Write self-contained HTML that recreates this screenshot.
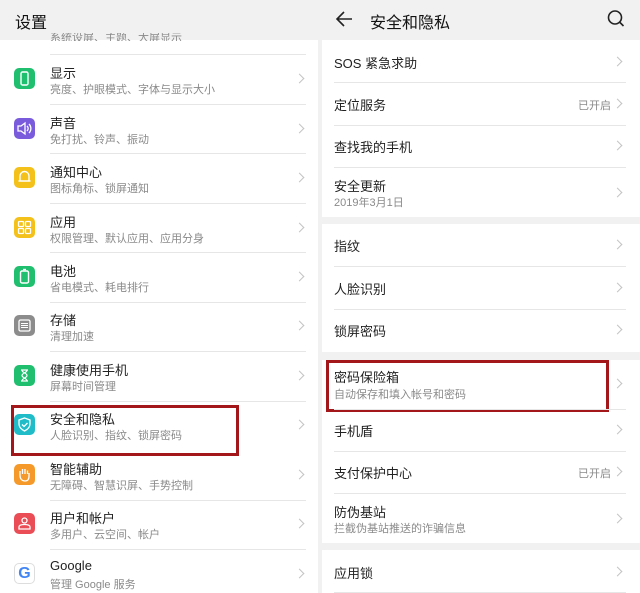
<!DOCTYPE html><html><head><meta charset="utf-8"><style>
*{margin:0;padding:0;box-sizing:border-box}
body{width:640px;height:593px;overflow:hidden;background:#fff;font-family:"Liberation Sans","Noto Sans CJK SC",sans-serif;position:relative}
.a{position:absolute;white-space:nowrap}
.t{font-size:13px;color:#222}
.s{font-size:11px;color:#8a8a8a}
.sep{position:absolute;height:1px;background:#e6e6e6}
.gap{position:absolute;left:320px;width:320px;background:#f1f1f1}
.ch{position:absolute;width:7px;height:7px;border-right:1.3px solid #c4c4c4;border-top:1.3px solid #c4c4c4;transform:rotate(45deg)}
.ic{position:absolute;left:14px;width:21px;height:21px;border-radius:5px}
.ic svg{position:absolute;left:0;top:0}
.box{position:absolute;border:3px solid #a3161a}
</style></head><body>
<div class="a" style="left:0;top:0;width:318px;height:40px;background:#f1f1f1"></div>
<div class="a" style="left:15px;top:9px;font-size:16px;color:#111">设置</div>
<div class="a" style="left:318px;top:0;width:4px;height:593px;background:#f1f1f1"></div>
<div class="a" style="left:322px;top:0;width:318px;height:40px;background:#f1f1f1"></div>
<svg class="a" style="left:334px;top:10px" width="20" height="18"><path d="M18 9H3M10 2L3 9l7 7" stroke="#222" stroke-width="1.6" fill="none"/></svg>
<div class="a" style="left:370px;top:9px;font-size:16px;color:#111">安全和隐私</div>
<svg class="a" style="left:606px;top:9px" width="20" height="20"><circle cx="9" cy="8.5" r="6.5" stroke="#222" stroke-width="1.6" fill="none"/><path d="M13.5 13l4 4" stroke="#222" stroke-width="1.6"/></svg>
<div class="a s" style="left:50px;top:33px;height:8px;overflow:hidden"><span style="position:relative;top:-4px">系统设屏、主题、大屏显示</span></div>
<div class="sep" style="left:50px;top:54px;width:256px"></div>
<div class="ic" style="top:68px;background:#1fbf6f"><svg width="21" height="21"><rect x="7" y="4" width="7" height="13" rx="1.5" stroke="#fff" stroke-width="1.4" fill="none"/></svg></div>
<div class="a t" style="left:50px;top:63px">显示</div><div class="a s" style="left:50px;top:81px">亮度、护眼模式、字体与显示大小</div><div class="ch" style="left:296px;top:75px"></div>
<div class="sep" style="left:50px;top:104px;width:256px"></div>
<div class="ic" style="top:118px;background:#7a5bdc"><svg width="21" height="21"><path d="M4 8h3l4-3v11l-4-3H4z M13 8c1.5 1.5 1.5 3.5 0 5 M15 6c2.5 2.5 2.5 6.5 0 9" stroke="#fff" stroke-width="1.3" fill="none"/></svg></div>
<div class="a t" style="left:50px;top:113px">声音</div><div class="a s" style="left:50px;top:131px">免打扰、铃声、振动</div><div class="ch" style="left:296px;top:125px"></div>
<div class="sep" style="left:50px;top:153px;width:256px"></div>
<div class="ic" style="top:167px;background:#f3c11a"><svg width="21" height="21"><path d="M6 14V9a4.5 4.5 0 019 0v5zM4.5 14h12" stroke="#fff" stroke-width="1.4" fill="none"/></svg></div>
<div class="a t" style="left:50px;top:162px">通知中心</div><div class="a s" style="left:50px;top:180px">图标角标、锁屏通知</div><div class="ch" style="left:296px;top:174px"></div>
<div class="sep" style="left:50px;top:203px;width:256px"></div>
<div class="ic" style="top:217px;background:#f3c11a"><svg width="21" height="21"><g stroke="#fff" stroke-width="1.3" fill="none"><rect x="4.5" y="4.5" width="5" height="5" rx="1"/><rect x="11.5" y="4.5" width="5" height="5" rx="1"/><rect x="4.5" y="11.5" width="5" height="5" rx="1"/><rect x="11.5" y="11.5" width="5" height="5" rx="1"/></g></svg></div>
<div class="a t" style="left:50px;top:212px">应用</div><div class="a s" style="left:50px;top:230px">权限管理、默认应用、应用分身</div><div class="ch" style="left:296px;top:224px"></div>
<div class="sep" style="left:50px;top:252px;width:256px"></div>
<div class="ic" style="top:266px;background:#1fbf6f"><svg width="21" height="21"><rect x="6.5" y="5" width="8" height="12" rx="1.5" stroke="#fff" stroke-width="1.4" fill="none"/><path d="M9 3.5h3" stroke="#fff" stroke-width="1.4"/></svg></div>
<div class="a t" style="left:50px;top:261px">电池</div><div class="a s" style="left:50px;top:279px">省电模式、耗电排行</div><div class="ch" style="left:296px;top:273px"></div>
<div class="sep" style="left:50px;top:302px;width:256px"></div>
<div class="ic" style="top:315px;background:#8c8c8c"><svg width="21" height="21"><rect x="5" y="5" width="11" height="11" rx="1.5" stroke="#fff" stroke-width="1.3" fill="none"/><path d="M7 8.5h7M7 10.5h7M7 12.5h7" stroke="#fff" stroke-width="1"/></svg></div>
<div class="a t" style="left:50px;top:310px">存储</div><div class="a s" style="left:50px;top:328px">清理加速</div><div class="ch" style="left:296px;top:322px"></div>
<div class="sep" style="left:50px;top:351px;width:256px"></div>
<div class="ic" style="top:365px;background:#1fbf6f"><svg width="21" height="21"><path d="M7 5h7M7 16h7M8 5c0 3 5 3 5 5.5S8 13 8 16M13 5c0 3-5 3-5 5.5S13 13 13 16" stroke="#fff" stroke-width="1.2" fill="none"/></svg></div>
<div class="a t" style="left:50px;top:360px">健康使用手机</div><div class="a s" style="left:50px;top:378px">屏幕时间管理</div><div class="ch" style="left:296px;top:372px"></div>
<div class="sep" style="left:50px;top:401px;width:256px"></div>
<div class="ic" style="top:414px;background:#20bcc8"><svg width="21" height="21"><path d="M10.5 4l5.5 2v4c0 3.5-2.5 5.5-5.5 7-3-1.5-5.5-3.5-5.5-7V6z M8 10.5l2 2 3.5-3.5" stroke="#fff" stroke-width="1.3" fill="none"/></svg></div>
<div class="a t" style="left:50px;top:409px">安全和隐私</div><div class="a s" style="left:50px;top:427px">人脸识别、指纹、锁屏密码</div><div class="ch" style="left:296px;top:421px"></div>
<div class="box" style="left:11px;top:405px;width:228px;height:51px"></div>
<div class="ic" style="top:464px;background:#f59a2a"><svg width="21" height="21"><path d="M6 11V7M8.5 10V5M11 10V5M13.5 10V6.5M6 11c0 4 2 6 5 6s4-2 4-5V9" stroke="#fff" stroke-width="1.3" fill="none"/></svg></div>
<div class="a t" style="left:50px;top:459px">智能辅助</div><div class="a s" style="left:50px;top:477px">无障碍、智慧识屏、手势控制</div><div class="ch" style="left:296px;top:471px"></div>
<div class="sep" style="left:50px;top:500px;width:256px"></div>
<div class="ic" style="top:513px;background:#ea4d55"><svg width="21" height="21"><circle cx="10.5" cy="7.5" r="2.5" stroke="#fff" stroke-width="1.3" fill="none"/><path d="M5 16v-2c0-1.5 2-2.5 5.5-2.5S16 12.5 16 14v2z" stroke="#fff" stroke-width="1.3" fill="none"/></svg></div>
<div class="a t" style="left:50px;top:508px">用户和帐户</div><div class="a s" style="left:50px;top:526px">多用户、云空间、帐户</div><div class="ch" style="left:296px;top:520px"></div>
<div class="sep" style="left:50px;top:549px;width:256px"></div>
<div class="ic" style="top:563px;background:#fff;border:1px solid #ddd;color:#4285f4;font-weight:bold;font-size:16px;text-align:center;line-height:19px">G</div>
<div class="a t" style="left:50px;top:558px">Google</div><div class="a s" style="left:50px;top:576px">管理 Google 服务</div><div class="ch" style="left:296px;top:570px"></div>

<div class="a t" style="left:334px;top:53px">SOS 紧急求助</div><div class="ch" style="left:614px;top:58px"></div>
<div class="sep" style="left:334px;top:82px;width:292px"></div>
<div class="a t" style="left:334px;top:95px">定位服务</div><div class="a s" style="left:578px;top:97px">已开启</div><div class="ch" style="left:614px;top:100px"></div>
<div class="sep" style="left:334px;top:125px;width:292px"></div>
<div class="a t" style="left:334px;top:137px">查找我的手机</div><div class="ch" style="left:614px;top:142px"></div>
<div class="sep" style="left:334px;top:167px;width:292px"></div>
<div class="a t" style="left:334px;top:176px">安全更新</div><div class="a s" style="left:334px;top:194px">2019年3月1日</div><div class="ch" style="left:614px;top:189px"></div>
<div class="gap" style="top:217px;height:7px"></div>
<div class="a t" style="left:334px;top:236px">指纹</div><div class="ch" style="left:614px;top:241px"></div>
<div class="sep" style="left:334px;top:266px;width:292px"></div>
<div class="a t" style="left:334px;top:279px">人脸识别</div><div class="ch" style="left:614px;top:284px"></div>
<div class="sep" style="left:334px;top:309px;width:292px"></div>
<div class="a t" style="left:334px;top:321px">锁屏密码</div><div class="ch" style="left:614px;top:326px"></div>
<div class="gap" style="top:352px;height:8px"></div>
<div class="a t" style="left:334px;top:367px">密码保险箱</div><div class="a s" style="left:334px;top:386px">自动保存和填入帐号和密码</div><div class="ch" style="left:614px;top:380px"></div>
<div class="box" style="left:326px;top:360px;width:283px;height:52px"></div>
<div class="sep" style="left:334px;top:409px;width:292px"></div>
<div class="a t" style="left:334px;top:421px">手机盾</div><div class="ch" style="left:614px;top:426px"></div>
<div class="sep" style="left:334px;top:451px;width:292px"></div>
<div class="a t" style="left:334px;top:463px">支付保护中心</div><div class="a s" style="left:578px;top:465px">已开启</div><div class="ch" style="left:614px;top:468px"></div>
<div class="sep" style="left:334px;top:493px;width:292px"></div>
<div class="a t" style="left:334px;top:502px">防伪基站</div><div class="a s" style="left:334px;top:520px">拦截伪基站推送的诈骗信息</div><div class="ch" style="left:614px;top:515px"></div>
<div class="gap" style="top:543px;height:7px"></div>
<div class="a t" style="left:334px;top:563px">应用锁</div><div class="ch" style="left:614px;top:568px"></div>
<div class="sep" style="left:334px;top:592px;width:292px"></div>
</body></html>
